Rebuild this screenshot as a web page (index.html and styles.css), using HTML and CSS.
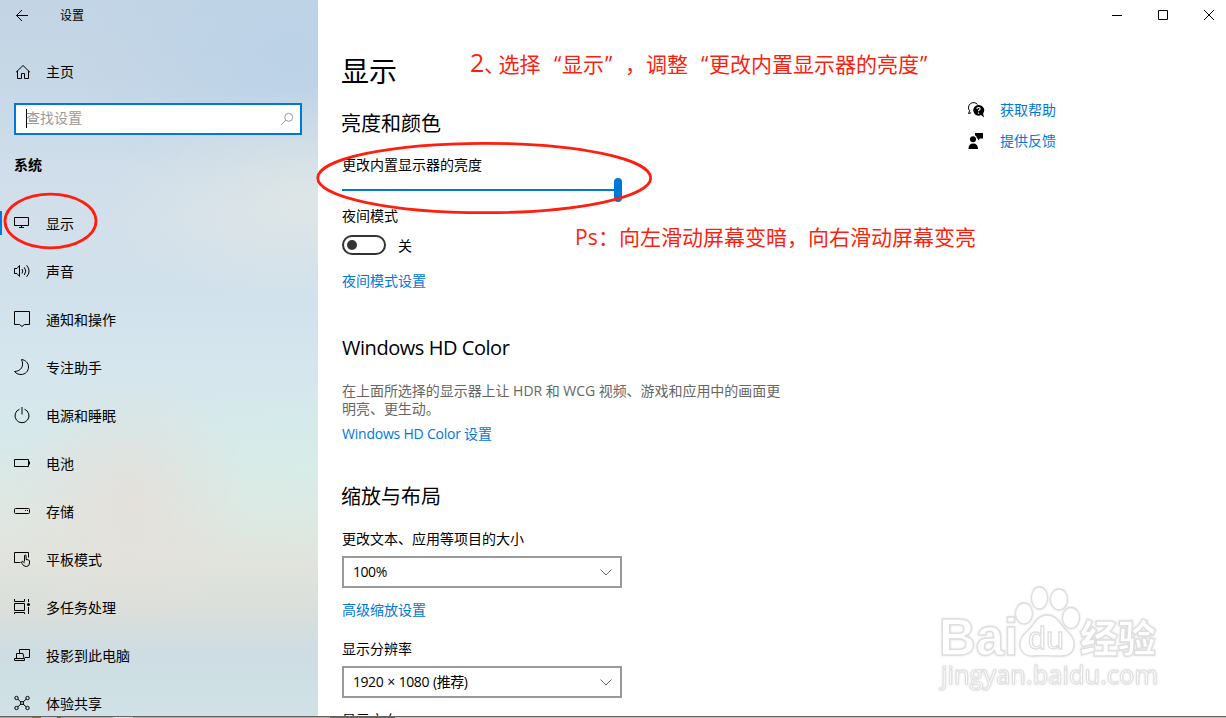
FILE: index.html
```html
<!DOCTYPE html>
<html lang="zh-CN">
<head>
    <meta charset="UTF-8">
    <meta name="viewport" content="width=device-width, initial-scale=1.0">
    <title>设置</title>
    <link rel="stylesheet" href="styles.css">
</head>
<body>
    <div class="window">
        <aside class="sidebar">
            <div class="titlebar">
                <svg class="back" width="14" height="14" viewBox="0 0 14 14"><path d="M1.5 6.5H13M7 1L1.5 6.5L7 12"/></svg>
                <span>设置</span>
            </div>
            <div class="home">
                <svg width="16" height="16" viewBox="0 0 16 16"><path d="M1 8.3L8 1.5l7 6.8M2.5 7v7.5h4v-5h3v5h4V7"/></svg>
                <span>主页</span>
            </div>
            <div class="search">
                <span class="caret"></span>
                <span class="placeholder">查找设置</span>
                <svg width="14" height="14" viewBox="0 0 14 14"><circle cx="8.7" cy="5.3" r="4"/><path d="M5.8 8.2L1 13"/></svg>
            </div>
            <h2 class="group">系统</h2>
            <ul class="menu">
                <li class="active">
                    <svg viewBox="0 0 20 20"><path d="M2.5 5.5h14v8h-14zM9.5 13.5v2M7 15.5h5"/></svg>
                    <span>显示</span>
                </li>
                <li>
                    <svg viewBox="0 0 20 20"><path d="M2.5 8.5H5l2.5-3v11L5 13.5H2.5zM10 9q1.5 2 0 4.5M12.3 7.3q3 3.7 0 7.7M14.6 5.3q5 5.7 0 11.5"/></svg>
                    <span>声音</span>
                </li>
                <li>
                    <svg viewBox="0 0 20 20"><path d="M2.5 3.5h15v13h-5l-2.5 2-2.5-2h-5z"/></svg>
                    <span>通知和操作</span>
                </li>
                <li>
                    <svg viewBox="0 0 20 20"><path d="M9.500 3.500C13.500 4 16.500 7 16.500 11c0 4.200-3.200 7.500-7.500 7.500-2.700 0-5-1-6.500-3C9 15.300 12.500 10 9.500 3.500z"/></svg>
                    <span>专注助手</span>
                </li>
                <li>
                    <svg viewBox="0 0 20 20"><path d="M7.500 5.200a7 7 0 1 0 5 0M10 3v7.500"/></svg>
                    <span>电源和睡眠</span>
                </li>
                <li>
                    <svg viewBox="0 0 20 20"><path d="M2.500 7.500h14v7h-14zM17.500 9.500v3"/></svg>
                    <span>电池</span>
                </li>
                <li>
                    <svg viewBox="0 0 20 20"><rect x="2.500" y="8.500" width="15" height="5" rx="1"/><path d="M13 10.500h1M15 10.500h1"/></svg>
                    <span>存储</span>
                </li>
                <li>
                    <svg viewBox="0 0 20 20"><path d="M8.500 14.500h-6v-10h14v5M12.500 13.500V8q0-1 .8-1t.8 1v3.500q3.400 0 3.400 1.500v2q0 3.500-3.200 3.500-3 0-4.300-3-.8-2 .3-2.300.9-.2 2.200 2"/></svg>
                    <span>平板模式</span>
                </li>
                <li>
                    <svg viewBox="0 0 20 20"><path d="M2.500 3v2.500h10V3M2.500 7.500h10v7h-10zM2.500 18v-1.500h10V18M16.500 3v3M16.500 11v7"/><circle class="dot" cx="16.500" cy="8.500" r="1.500"/></svg>
                    <span>多任务处理</span>
                </li>
                <li>
                    <svg viewBox="0 0 20 20"><path d="M7.500 9V5.500h10v8h-4.500M4.500 14V9.500h6.500L12 14M2.500 14.500h10v2h-10z"/></svg>
                    <span>投影到此电脑</span>
                </li>
                <li>
                    <svg viewBox="0 0 20 20"><circle cx="4.500" cy="6" r="1.700"/><circle cx="15.500" cy="6" r="1.700"/><circle cx="4.500" cy="16" r="1.700"/><circle cx="15.500" cy="16" r="1.700"/><circle cx="10" cy="11" r="1.500"/><path d="M5.800 7.200L9 10M14.200 7.200L11 10M5.800 14.800L9 12M14.200 14.800L11 12"/></svg>
                    <span>体验共享</span>
                </li>
            </ul>
        </aside>

        <main class="content">
            <div class="settings">
                <h1>显示</h1>
                <h2 class="section">亮度和颜色</h2>
                <p class="label brightness">更改内置显示器的亮度</p>
                <div class="slider"><span class="track"></span><span class="thumb"></span></div>
                <p class="label">夜间模式</p>
                <div class="toggle-row"><span class="toggle"></span><span class="state">关</span></div>
                <a class="link night">夜间模式设置</a>

                <h2 class="section hd">Windows HD Color</h2>
                <p class="desc">在上面所选择的显示器上让 HDR 和 WCG 视频、游戏和应用中的画面更明亮、更生动。</p>
                <a class="link hd-link">Windows HD Color 设置</a>

                <h2 class="section scale">缩放与布局</h2>
                <p class="label size">更改文本、应用等项目的大小</p>
                <div class="select">
                    <span>100%</span>
                    <svg width="12" height="7" viewBox="0 0 12 7"><path d="M.5 .5L6 6L11.500 .5"/></svg>
                </div>
                <a class="link adv">高级缩放设置</a>
                <p class="label res">显示分辨率</p>
                <div class="select">
                    <span>1920 × 1080 (推荐)</span>
                    <svg width="12" height="7" viewBox="0 0 12 7"><path d="M.5 .5L6 6L11.500 .5"/></svg>
                </div>
                <p class="label orient">显示方向</p>
            </div>

            <div class="right">
                <div class="controls">
                    <svg width="12" height="12" viewBox="0 0 12 12"><path d="M1 6.500h10"/></svg>
                    <svg width="12" height="12" viewBox="0 0 12 12"><path d="M1.500 1.500h9v9h-9z"/></svg>
                    <svg width="12" height="12" viewBox="0 0 12 12"><path d="M1 1l10 10M11 1L1 11"/></svg>
                </div>
                <div class="help">
                    <svg width="18" height="18" viewBox="0 0 18 18"><path class="line" d="M4.200 11.800L1.500 12.500 2.600 9.800A5 5 0 1 1 10.500 3.500"/><path d="M11.500 4a5.300 5.300 0 1 0 2.500 10l3 2.500-.9-4A5.300 5.300 0 0 0 11.500 4z"/><path class="mark" d="M9.900 8q0-1.500 1.600-1.500t1.600 1.300q0 .8-.9 1.300-.7.400-.7 1.200M11.500 11.500v1.200"/></svg>
                    <a class="link">获取帮助</a>
                </div>
                <div class="help">
                    <svg width="18" height="18" viewBox="0 0 18 18"><circle cx="6" cy="7.200" r="3"/><path d="M1.500 17q0-5.500 4.700-5.500T11 17zM8 1h8v5.500h-3l-2 2v-2h-1Q10 4 8 3.200z"/></svg>
                    <a class="link">提供反馈</a>
                </div>
            </div>
        </main>
    </div>
    <div class="desktop-edge"></div>

    <!-- red hand-made notes and the site watermark -->
    <svg class="overlay" width="1226" height="718" viewBox="0 0 1226 718">
        <g class="watermark">
            <text class="wm-bai" x="939" y="655" textLength="79" lengthAdjust="spacingAndGlyphs">Bai</text>
            <ellipse cx="1024" cy="613.500" rx="8.500" ry="10.500"/>
            <ellipse cx="1039.500" cy="598" rx="8" ry="11"/>
            <ellipse cx="1059" cy="599.500" rx="8.500" ry="10.500"/>
            <ellipse cx="1071" cy="618" rx="8.500" ry="10.500"/>
            <path d="M1047 615c9 0 13 8 17 13 6 6 11 10 10 18-1 7-6 10-13 10-8 0-20-1-29 0-7 0-12-5-12-12 0-8 7-12 12-18 4-6 8-11 15-11z"/>
            <text class="wm-du" x="1028" y="649" textLength="36" lengthAdjust="spacingAndGlyphs">du</text>
            <text class="wm-cn" x="1080" y="652" textLength="76">经验</text>
            <text class="wm-url" x="941" y="684" textLength="217" lengthAdjust="spacingAndGlyphs">jingyan.baidu.com</text>
        </g>
        <g class="rings">
            <ellipse cx="50.500" cy="221" rx="45.500" ry="26.800"/>
            <ellipse cx="484.200" cy="178" rx="166.500" ry="34.700"/>
        </g>
        <g class="note">
            <text x="470" y="71.500" class="num">2</text>
            <text x="484" y="72">、</text>
            <text x="498.500" y="72">选择</text>
            <text x="554" y="72">“</text>
            <text x="562" y="72">显示</text>
            <text x="605" y="72">”</text>
            <text x="625" y="72">，</text>
            <text x="646" y="72">调整</text>
            <text x="701" y="72">“</text>
            <text x="709" y="72">更改内置显示器的亮度</text>
            <text x="920" y="72">”</text>
            <text x="575" y="245" class="ps">Ps</text>
            <text x="598" y="245">：</text>
            <text x="619" y="245">向左滑动屏幕变暗</text>
            <text x="787" y="245">，</text>
            <text x="808" y="245">向右滑动屏幕变亮</text>
        </g>
    </svg>
</body>
</html>
```

FILE: styles.css
```css
* {
    box-sizing: border-box;
}
body {
    margin: 0;
    height: 718px;
    overflow: hidden;
    background: #fff;
    color: #000;
    font-family: "Open Sans", "Noto Sans CJK SC", sans-serif;
    font-size: 14px;
    line-height: 20px;
}
h1, h2, p, ul {
    margin: 0;
    padding: 0;
    font-weight: normal;
}
svg {
    fill: none;
    stroke: #000;
    stroke-width: 1;
    flex: none;
}
.window {
    display: flex;
    height: 716px;
    overflow: hidden;
}

/* left navigation */
.sidebar {
    width: 318px;
    flex: none;
    background:
        radial-gradient(ellipse 120px 130px at 130px 500px, rgba(230, 222, 217, 0.75), rgba(230, 222, 217, 0)),
        radial-gradient(ellipse 190px 110px at 300px 200px, rgba(225, 231, 229, 0.8), rgba(225, 231, 229, 0)),
        radial-gradient(ellipse 220px 150px at 290px 60px, rgba(184, 208, 232, 0.7), rgba(184, 208, 232, 0)),
        radial-gradient(ellipse 240px 90px at 318px 470px, rgba(214, 239, 232, 0.6), rgba(214, 239, 232, 0)),
        linear-gradient(to bottom, #c3d5e5 0, #c6d7e6 80px, #cfdeea 170px, #d3e0eb 230px, #d0e1ec 290px, #d5e6ee 370px, #d5e9eb 430px, #dfe7e2 510px, #e1e4dd 560px, #dadfdb 610px, #cddde3 655px, #d0e2e6 716px);
}
.titlebar {
    display: flex;
    align-items: center;
    height: 31px;
    padding-left: 15px;
    font-size: 12px;
}
.titlebar span {
    margin-left: 31px;
}
.home {
    display: flex;
    align-items: center;
    height: 24px;
    margin-top: 29px;
    padding-left: 15px;
}
.home span {
    margin-left: 15px;
}
.search {
    display: flex;
    align-items: center;
    width: 288px;
    height: 32px;
    margin: 19px 0 0 14px;
    padding: 0 6px 2px 10px;
    background: #fff;
    border: 2px solid #0078d7;
}
.search svg {
    margin: 2px 0 0 auto;
    stroke: #999;
}
.caret {
    width: 1px;
    height: 19px;
    background: #000;
}
.placeholder {
    margin-left: -1px;
    color: #999;
}
.group {
    margin: 20px 0 25px 14px;
    font-size: 14px;
    font-weight: bold;
}
.menu {
    list-style: none;
}
.menu li {
    position: relative;
    display: flex;
    align-items: center;
    height: 48px;
    padding-left: 12px;
}
.menu svg {
    width: 20px;
    height: 20px;
    margin: 0 14px 4px 0;
}
.menu .dot {
    fill: #000;
    stroke: none;
}
.menu .active::before {
    content: '';
    position: absolute;
    left: 0;
    top: 11px;
    width: 2px;
    height: 24px;
    background: #0078d7;
}

/* settings page */
.content {
    display: flex;
    flex: 1;
    justify-content: space-between;
    padding-left: 24px;
}
.settings {
    width: 450px;
    padding-top: 51px;
}
h1 {
    margin-left: -1px;
    font-size: 28px;
    line-height: 40px;
}
.section {
    font-size: 20px;
    line-height: 28px;
    margin: 19px 0 0 -1px;
}
.brightness {
    margin-top: 17px;
}
.slider {
    display: flex;
    align-items: center;
    width: 280px;
    height: 24px;
    margin: 3px 0 4px;
}
.track {
    flex: 1;
    height: 2px;
    background: #0078d7;
}
.thumb {
    width: 8px;
    height: 24px;
    border-radius: 4px;
    background: #0078d7;
}
.toggle-row {
    display: flex;
    align-items: center;
    gap: 12px;
    height: 20px;
    margin-top: 9px;
}
.toggle {
    width: 44px;
    height: 20px;
    border: 2px solid #333;
    border-radius: 10px;
    padding: 3px;
}
.toggle::before {
    content: '';
    display: block;
    width: 10px;
    height: 10px;
    border-radius: 50%;
    background: #333;
}
.state {
    padding-top: 2px;
}
.link {
    display: block;
    color: #0078d7;
}
.night {
    margin-top: 16px;
}
.hd {
    margin: 43px 0 0;
    letter-spacing: -0.45px;
}
.desc {
    margin-top: 20px;
    line-height: 18px;
    color: #666;
    letter-spacing: -0.04px;
}
.hd-link {
    margin-top: 6px;
    letter-spacing: -0.22px;
}
.scale {
    margin-top: 39px;
}
.size {
    margin-top: 18px;
}
.select {
    display: flex;
    align-items: center;
    justify-content: space-between;
    width: 280px;
    height: 32px;
    margin-top: 7px;
    padding: 0 8px 0 9px;
    border: 2px solid #999;
    letter-spacing: -0.45px;
    word-spacing: 0.8px;
}
.select svg {
    stroke: #666;
}
.adv {
    margin-top: 12px;
}
.res {
    margin-top: 19px;
}
.orient {
    margin-top: 12px;
}

/* window buttons and help links */
.right {
    width: 260px;
}
.controls {
    display: flex;
    justify-content: flex-end;
    gap: 34px;
    padding: 9px 11px 0 0;
    margin-bottom: 79px;
}
.help {
    display: flex;
    align-items: center;
    gap: 15px;
    height: 20px;
    margin: 0 0 11px 1px;
}
.help svg {
    fill: #000;
    stroke: none;
}
.help .line {
    fill: none;
    stroke: #000;
}
.help .mark {
    fill: none;
    stroke: #fff;
    stroke-width: 1.2;
}
.desktop-edge {
    height: 2px;
    border-top: 1px solid #66625f;
    background: linear-gradient(to right, #aaa39c 0 32px, #d4520e 32px 41px, #ccc 41px 57px, #3d7a30 57px 61px, #aaa 61px 113px, #e4e4e4 113px 133px, #b3aca8 133px 330px, #6c6761 330px 395px, #c5bfbc 395px);
}

/* annotations */
.overlay {
    position: absolute;
    left: 0;
    top: 0;
    pointer-events: none;
}
.rings {
    stroke: #fe1f10;
    stroke-width: 2.8;
}
.note {
    fill: #fe1f10;
    stroke: none;
    font-size: 21px;
}
.note .num {
    font-size: 25px;
}
.note .ps {
    font-size: 21px;
}
.watermark {
    fill: #fff;
    stroke: #dedede;
    stroke-width: 1.3;
    filter: drop-shadow(0 0 1px #ddd);
}
.wm-bai {
    font: bold 51px "Liberation Sans", sans-serif;
}
.wm-du {
    font: 31px "Liberation Sans", sans-serif;
}
.wm-cn {
    font: 900 38px "Noto Sans CJK SC", sans-serif;
}
.wm-url {
    font: 26px "Open Sans", sans-serif;
    stroke-width: 1;
}
```
